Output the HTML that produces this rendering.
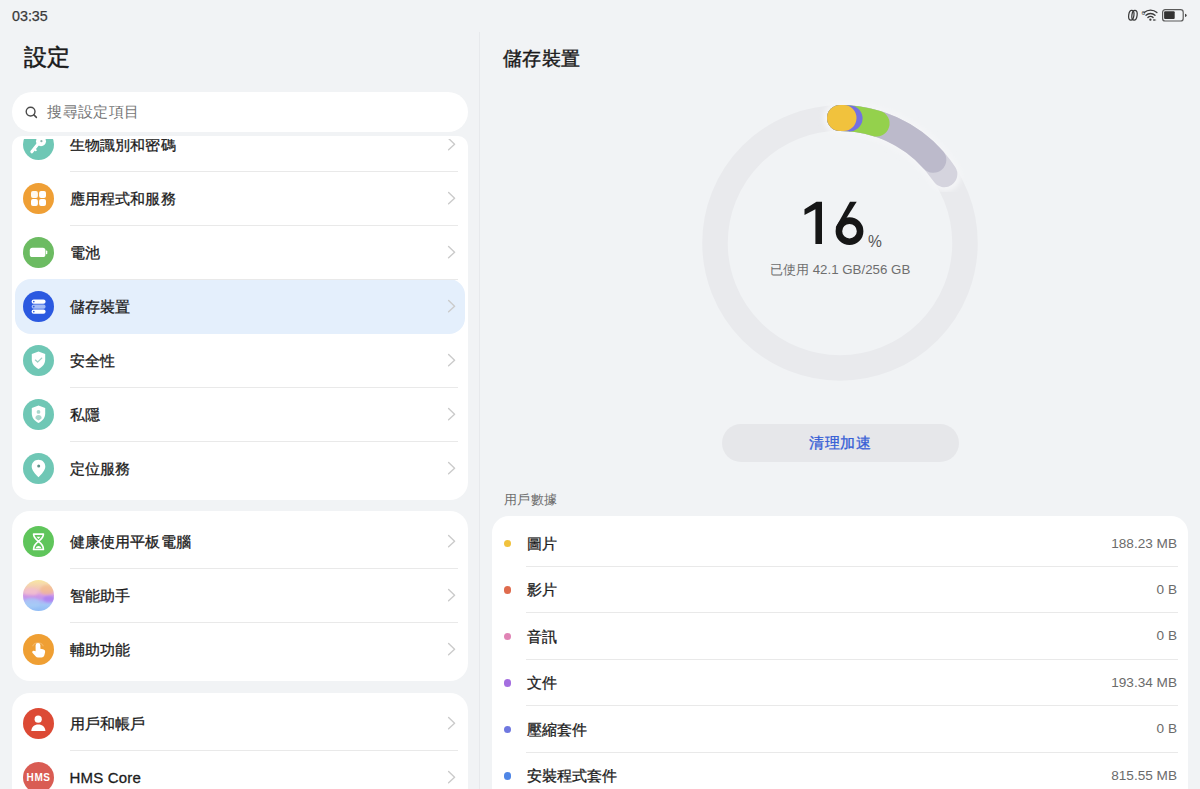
<!DOCTYPE html>
<html lang="zh-Hant-TW"><head><meta charset="utf-8">
<style>
*{margin:0;padding:0;box-sizing:border-box}
html,body{width:1200px;height:789px;overflow:hidden;background:#f1f3f5;font-family:"Liberation Sans",sans-serif;color:#1f1f1f}
.abs{position:absolute}
#time{left:12px;top:7.5px;font-size:14.3px;line-height:16px;color:#3a3a3a;-webkit-text-stroke:0.25px #3a3a3a}
#divider{left:479px;top:32px;width:1px;height:757px;background:#e7e9ec}
#title{left:24px;top:42.5px;font-size:23px;line-height:28px;color:#1a1a1a;-webkit-text-stroke:0.5px #1a1a1a}
#search{left:12px;top:92px;width:456px;height:40px;border-radius:20px;background:#fff}
#search .txt{position:absolute;left:35.3px;top:11px;font-size:15px;letter-spacing:0.4px;line-height:18px;color:#767676}
#clip{left:12px;top:136px;width:456px;height:653px;overflow:hidden;border-radius:10px 10px 0 0}
#fade{left:22px;top:136px;width:436px;height:2.6px;background:#fff}
.card{position:absolute;left:0;width:456px;background:#fff;border-radius:18px;padding:4px 0}
.row{position:relative;height:54px}
.row .ic{position:absolute;left:11px;top:11px}
.row .lb{position:absolute;left:57.5px;top:0;line-height:54px;font-size:15px;letter-spacing:0.2px;color:#1c1c1c;-webkit-text-stroke:0.3px #1c1c1c}
.row .sep{position:absolute;left:57.5px;width:388px;bottom:0;height:1px;background:#e9e9e9}
.row .chev{position:absolute;left:435px;top:19px}
.hl{position:absolute;left:3px;top:165px;width:450px;height:55px;background:#e4effc;border-radius:16px}
#rtitle{left:503px;top:45.5px;font-size:19px;letter-spacing:0.4px;line-height:26px;color:#1a1a1a;-webkit-text-stroke:0.45px #1a1a1a}
.drow{position:relative;height:46.45px}
.dot{position:absolute;left:11.5px;top:19.5px;width:7.4px;height:7.4px;border-radius:50%}
.dl{position:absolute;left:35px;top:0.5px;line-height:46px;font-size:15px;color:#1c1c1c;-webkit-text-stroke:0.3px #1c1c1c}
.dv{position:absolute;right:11px;top:0px;line-height:46px;font-size:13.6px;color:#6b6b6b}
.dsep{position:absolute;left:34px;right:10.5px;bottom:0;height:1px;background:#e9e9e9}
</style></head><body>
<div class="abs" id="time">03:35</div>
<svg class="abs" style="left:1124px;top:6px" width="66" height="18" viewBox="0 0 66 18">
 <ellipse cx="7.3" cy="9.2" rx="2.6" ry="4.9" transform="rotate(8 7.3 9.2)" fill="none" stroke="#3a3a3a" stroke-width="1.25"/>
 <ellipse cx="10.5" cy="9.2" rx="2.6" ry="4.9" transform="rotate(8 10.5 9.2)" fill="none" stroke="#3a3a3a" stroke-width="1.25"/>
 <path d="M20.2 6.6 A9.6 9.6 0 0 1 32.9 6.6" fill="none" stroke="#3a3a3a" stroke-width="1.35" stroke-linecap="round"/>
 <path d="M22.0 9.3 A6.5 6.5 0 0 1 31.0 9.3" fill="none" stroke="#3a3a3a" stroke-width="1.35" stroke-linecap="round"/>
 <path d="M23.9 11.6 A3.7 3.7 0 0 1 29.1 11.6" fill="none" stroke="#3a3a3a" stroke-width="1.35" stroke-linecap="round"/>
 <circle cx="26.4" cy="13.7" r="1.15" fill="#3a3a3a"/>
 <path d="M29.4 13.1 L32.6 14 L29.4 14.9 Z" fill="#3a3a3a"/>
 <text x="17.5" y="8.6" font-family="Liberation Sans" font-size="6.2" fill="#3a3a3a">6</text>
 <rect x="38.6" y="3.6" width="20.6" height="11.4" rx="2.6" fill="none" stroke="#5a5a5a" stroke-width="1.2"/>
 <rect x="40.1" y="5.2" width="10.6" height="7.9" rx="1" fill="#333"/>
 <path d="M61 7.7 A1.6 1.6 0 0 1 61 10.9 Z" fill="#444"/>
</svg>
<div class="abs" id="divider"></div>
<div class="abs" id="title">設定</div>
<div class="abs" id="search">
  <svg class="abs" style="left:12px;top:13px" width="15" height="15" viewBox="0 0 15 15"><circle cx="6.6" cy="6.6" r="4.4" fill="none" stroke="#4a4a4a" stroke-width="1.4"/><path d="M9.9 9.9 L12.4 12.4" stroke="#4a4a4a" stroke-width="1.5" stroke-linecap="round"/></svg>
  <div class="txt">搜尋設定項目</div>
</div>
<div class="abs" id="clip">
  <div class="card" style="top:-22px"><div class="hl"></div><div class="row "><svg class="ic" width="31" height="31" viewBox="0 0 31 31"><circle cx="15.5" cy="15.5" r="15.5" fill="#6fc7b5"/>
<circle cx="18" cy="12.2" r="5" fill="#fff"/><circle cx="18.4" cy="12.2" r="1.1" fill="#8fb3ad"/>
<path d="M15.2 14.8 L8.8 22.8" stroke="#fff" stroke-width="3" stroke-linecap="round"/>
<path d="M11.2 19.8 L12.8 21.2" stroke="#fff" stroke-width="2" stroke-linecap="round"/></svg><div class="lb">生物識別和密碼</div><svg class="chev" width="10" height="16" viewBox="0 0 10 16"><path d="M1.6 1.6 L7.6 7.2 L1.6 12.8" fill="none" stroke="#cbcbcb" stroke-width="1.4" stroke-linecap="round" stroke-linejoin="round"/></svg><div class=sep></div></div><div class="row "><svg class="ic" width="31" height="31" viewBox="0 0 31 31"><circle cx="15.5" cy="15.5" r="15.5" fill="#ef9f35"/>
<rect x="8" y="8" width="6.9" height="6.9" rx="1.9" fill="#fff" fill-opacity="0.92"/>
<rect x="16.1" y="8" width="6.9" height="6.9" rx="1.9" fill="#fff"/>
<rect x="8" y="16.1" width="6.9" height="6.9" rx="1.9" fill="#fff"/>
<rect x="16.1" y="16.1" width="6.9" height="6.9" rx="1.9" fill="#fff"/></svg><div class="lb">應用程式和服務</div><svg class="chev" width="10" height="16" viewBox="0 0 10 16"><path d="M1.6 1.6 L7.6 7.2 L1.6 12.8" fill="none" stroke="#cbcbcb" stroke-width="1.4" stroke-linecap="round" stroke-linejoin="round"/></svg><div class=sep></div></div><div class="row "><svg class="ic" width="31" height="31" viewBox="0 0 31 31"><circle cx="15.5" cy="15.5" r="15.5" fill="#6cbb62"/>
<rect x="6.8" y="10.7" width="15.6" height="9.4" rx="2.6" fill="#fff"/>
<rect x="22.9" y="13.6" width="1.4" height="3.6" rx="0.6" fill="#fff"/></svg><div class="lb">電池</div><svg class="chev" width="10" height="16" viewBox="0 0 10 16"><path d="M1.6 1.6 L7.6 7.2 L1.6 12.8" fill="none" stroke="#cbcbcb" stroke-width="1.4" stroke-linecap="round" stroke-linejoin="round"/></svg><div class=sep></div></div><div class="row "><svg class="ic" width="31" height="31" viewBox="0 0 31 31"><circle cx="15.5" cy="15.5" r="15.5" fill="#2b59e0"/>
<rect x="8.6" y="8.5" width="14" height="4.3" rx="2.15" fill="#fff"/>
<rect x="8.6" y="13.5" width="14" height="4.3" rx="2.15" fill="#a4bcf6"/>
<rect x="8.6" y="18.5" width="14" height="4.3" rx="2.15" fill="#fff"/>
<circle cx="10.8" cy="10.65" r="0.8" fill="#2b59e0"/><circle cx="10.8" cy="15.65" r="0.8" fill="#2b59e0"/><circle cx="10.8" cy="20.65" r="0.8" fill="#2b59e0"/></svg><div class="lb">儲存裝置</div><svg class="chev" width="10" height="16" viewBox="0 0 10 16"><path d="M1.6 1.6 L7.6 7.2 L1.6 12.8" fill="none" stroke="#cbcbcb" stroke-width="1.4" stroke-linecap="round" stroke-linejoin="round"/></svg></div><div class="row "><svg class="ic" width="31" height="31" viewBox="0 0 31 31"><circle cx="15.5" cy="15.5" r="15.5" fill="#6fc7b5"/>
<path d="M15.5 6.6 L22.2 9.1 V14.6 C22.2 18.9 19.3 22.3 15.5 24 C11.7 22.3 8.8 18.9 8.8 14.6 V9.1 Z" fill="#fff"/>
<path d="M12.4 15.1 L14.6 17.1 L18.7 13.1" fill="none" stroke="#9ccfc3" stroke-width="1.3" stroke-linecap="round" stroke-linejoin="round"/></svg><div class="lb">安全性</div><svg class="chev" width="10" height="16" viewBox="0 0 10 16"><path d="M1.6 1.6 L7.6 7.2 L1.6 12.8" fill="none" stroke="#cbcbcb" stroke-width="1.4" stroke-linecap="round" stroke-linejoin="round"/></svg><div class=sep></div></div><div class="row "><svg class="ic" width="31" height="31" viewBox="0 0 31 31"><circle cx="15.5" cy="15.5" r="15.5" fill="#6fc7b5"/>
<path d="M15.5 6.6 L22.2 9.1 V14.6 C22.2 18.9 19.3 22.3 15.5 24 C11.7 22.3 8.8 18.9 8.8 14.6 V9.1 Z" fill="#fff"/>
<circle cx="15.5" cy="12.9" r="1.9" fill="#a9d6cc"/>
<path d="M12.3 19.2 C12.5 16.9 13.8 15.9 15.5 15.9 C17.2 15.9 18.5 16.9 18.7 19.2 C17.8 20.3 16.7 21 15.5 21.4 C14.3 21 13.2 20.3 12.3 19.2 Z" fill="#a9d6cc"/></svg><div class="lb">私隱</div><svg class="chev" width="10" height="16" viewBox="0 0 10 16"><path d="M1.6 1.6 L7.6 7.2 L1.6 12.8" fill="none" stroke="#cbcbcb" stroke-width="1.4" stroke-linecap="round" stroke-linejoin="round"/></svg><div class=sep></div></div><div class="row "><svg class="ic" width="31" height="31" viewBox="0 0 31 31"><circle cx="15.5" cy="15.5" r="15.5" fill="#6fc7b5"/>
<path d="M15.5 6.8 C11.6 6.8 8.7 9.7 8.7 13.6 C8.7 17.5 12.3 21 15.5 24.3 C18.7 21 22.3 17.5 22.3 13.6 C22.3 9.7 19.4 6.8 15.5 6.8 Z" fill="#fff"/>
<circle cx="15.7" cy="12.9" r="1.5" fill="#5f8f86"/></svg><div class="lb">定位服務</div><svg class="chev" width="10" height="16" viewBox="0 0 10 16"><path d="M1.6 1.6 L7.6 7.2 L1.6 12.8" fill="none" stroke="#cbcbcb" stroke-width="1.4" stroke-linecap="round" stroke-linejoin="round"/></svg></div></div>
  <div class="card" style="top:375px"><div class="row "><svg class="ic" width="31" height="31" viewBox="0 0 31 31"><circle cx="15.5" cy="15.5" r="15.5" fill="#5fc55b"/>
<path d="M10.6 8.1 H20.4 C20.4 11.3 18.2 13.5 15.5 15.4 C12.8 13.5 10.6 11.3 10.6 8.1 Z M10.6 23.5 H20.4 C20.4 19.9 18.2 17.3 15.5 15.4 C12.8 17.3 10.6 19.9 10.6 23.5 Z" fill="none" stroke="#fff" stroke-width="1.7" stroke-linejoin="round"/>
<path d="M13.5 10.8 H17.5 L15.5 13 Z" fill="#fff"/><path d="M12.6 22.2 C13.2 20.6 14.2 19.9 15.5 19.9 C16.8 19.9 17.8 20.6 18.4 22.2 Z" fill="#fff"/></svg><div class="lb">健康使用平板電腦</div><svg class="chev" width="10" height="16" viewBox="0 0 10 16"><path d="M1.6 1.6 L7.6 7.2 L1.6 12.8" fill="none" stroke="#cbcbcb" stroke-width="1.4" stroke-linecap="round" stroke-linejoin="round"/></svg><div class=sep></div></div><div class="row "><svg class="ic" width="31" height="31" viewBox="0 0 31 31"><defs><linearGradient id="ga" x1="0" y1="0" x2="0" y2="1"><stop offset="0" stop-color="#f8e7a2"/><stop offset="0.3" stop-color="#f2c6b9"/><stop offset="0.48" stop-color="#dba0e0"/><stop offset="0.62" stop-color="#b7a8f4"/><stop offset="0.8" stop-color="#a2c6f6"/><stop offset="1" stop-color="#90bcf5"/></linearGradient><clipPath id="ca"><circle cx="15.5" cy="15.5" r="15.5"/></clipPath><filter id="fa" x="-20%" y="-20%" width="140%" height="140%"><feGaussianBlur stdDeviation="1.2"/></filter></defs>
<circle cx="15.5" cy="15.5" r="15.5" fill="url(#ga)"/>
<g clip-path="url(#ca)" filter="url(#fa)"><ellipse cx="8" cy="12" rx="7" ry="4" fill="#f3bfd0" opacity="0.8"/><ellipse cx="24" cy="10" rx="7" ry="5" fill="#f2b77e" opacity="0.55"/><path d="M0 15 C8 14 16 16 31 17 V21 C20 20 10 18 0 19 Z" fill="#c88ae8" opacity="0.55"/><ellipse cx="26" cy="19" rx="6" ry="3.5" fill="#a97cf2" opacity="0.7"/><ellipse cx="9" cy="23" rx="8" ry="5" fill="#a9cdf6" opacity="0.6"/></g></svg><div class="lb">智能助手</div><svg class="chev" width="10" height="16" viewBox="0 0 10 16"><path d="M1.6 1.6 L7.6 7.2 L1.6 12.8" fill="none" stroke="#cbcbcb" stroke-width="1.4" stroke-linecap="round" stroke-linejoin="round"/></svg><div class=sep></div></div><div class="row "><svg class="ic" width="31" height="31" viewBox="0 0 31 31"><circle cx="15.5" cy="15.5" r="15.5" fill="#ef9f33"/>
<path d="M9.6 12.2 A5.9 5.9 0 0 1 20.4 12.2" fill="none" stroke="#f4b868" stroke-width="1.1"/>
<path d="M12.6 17.3 V11.3 A2.4 2.4 0 0 1 17.4 11.3 V14.7 L20 15.3 C21.6 15.7 22.4 16.7 22.1 18.2 L21.4 21.1 C21.1 22.6 20 23.4 18.5 23.4 H15 C14.1 23.4 13.3 23 12.8 22.4 L9.6 18.9 C9 18.2 9.2 17.2 10 16.9 C10.8 16.6 11.7 16.7 12.6 17.3 Z" fill="#fff"/></svg><div class="lb">輔助功能</div><svg class="chev" width="10" height="16" viewBox="0 0 10 16"><path d="M1.6 1.6 L7.6 7.2 L1.6 12.8" fill="none" stroke="#cbcbcb" stroke-width="1.4" stroke-linecap="round" stroke-linejoin="round"/></svg></div></div>
  <div class="card" style="top:557px"><div class="row "><svg class="ic" width="31" height="31" viewBox="0 0 31 31"><circle cx="15.5" cy="15.5" r="15.5" fill="#dc4a35"/>
<circle cx="15.2" cy="11.2" r="3.6" fill="#fff"/>
<path d="M8.3 23.1 C8.3 19 11.3 16.4 15.3 16.4 C19.3 16.4 22.4 19 22.4 23.1 Z" fill="#fff"/></svg><div class="lb">用戶和帳戶</div><svg class="chev" width="10" height="16" viewBox="0 0 10 16"><path d="M1.6 1.6 L7.6 7.2 L1.6 12.8" fill="none" stroke="#cbcbcb" stroke-width="1.4" stroke-linecap="round" stroke-linejoin="round"/></svg><div class=sep></div></div><div class="row "><svg class="ic" width="31" height="31" viewBox="0 0 31 31"><circle cx="15.5" cy="15.5" r="15.5" fill="#d95c53"/>
<text x="15.6" y="19.1" text-anchor="middle" font-family="Liberation Sans" font-weight="bold" font-size="10" letter-spacing="0.6" fill="#fff">HMS</text></svg><div class="lb">HMS Core</div><svg class="chev" width="10" height="16" viewBox="0 0 10 16"><path d="M1.6 1.6 L7.6 7.2 L1.6 12.8" fill="none" stroke="#cbcbcb" stroke-width="1.4" stroke-linecap="round" stroke-linejoin="round"/></svg><div class=sep></div></div></div>
</div>

<div class="abs" id="fade"></div>
<div class="abs" id="rtitle">儲存裝置</div>
<svg class="abs" style="left:690.3px;top:92.5px" width="300" height="300" viewBox="0 0 300 300">
  <defs><filter id="halo" x="-30%" y="-30%" width="160%" height="160%"><feGaussianBlur stdDeviation="2.5"/></filter></defs>
  <circle cx="150" cy="150" r="125" fill="none" stroke="#e9eaed" stroke-width="25.5"/>
  <path d="M 150.00 25.00 A 125 125 0 0 1 254.83 81.92" fill="none" stroke="#f4f5f7" stroke-width="33" stroke-linecap="round" filter="url(#halo)"/>
  <path d="M 150.00 25.00 A 125 125 0 0 1 254.36 81.19" fill="none" stroke="#d5d4de" stroke-width="26" stroke-linecap="round"/>
<path d="M 150.00 25.00 A 125 125 0 0 1 243.33 66.85" fill="none" stroke="#bcbacb" stroke-width="26" stroke-linecap="round"/>
<path d="M 150.00 25.00 A 125 125 0 0 1 186.55 30.46" fill="none" stroke="#94d14c" stroke-width="26" stroke-linecap="round"/>
<path d="M 150.00 25.00 A 125 125 0 0 1 159.59 25.37" fill="none" stroke="#7470e2" stroke-width="26" stroke-linecap="round"/>
<path d="M 150.00 25.00 A 125 125 0 0 1 153.49 25.05" fill="none" stroke="#f1c23d" stroke-width="26" stroke-linecap="round"/>
</svg>
<svg class="abs" style="left:798px;top:196px" width="70" height="54" viewBox="0 0 70 54"><path d="M24 5.8 V47.9 H17.4 V13.2 L6.5 19 V13.3 L18.5 5.8 Z" fill="#161616"/><circle cx="51.5" cy="35.2" r="10.6" fill="none" stroke="#161616" stroke-width="6.6"/><path d="M52 5.8 H58.7 L44.3 28.6 L37.6 31.8 Z" fill="#161616"/></svg>
<div class="abs" style="left:868px;top:233px;font-size:15.6px;line-height:18px;color:#555">%</div>
<div class="abs" style="left:770px;top:261px;font-size:13px;line-height:18px;color:#6e6e6e">已使用<span style="font-size:13.3px"> 42.1 GB/256 GB</span></div>
<div class="abs" style="left:721.5px;top:424px;width:237px;height:38px;border-radius:19px;background:#e6e7ea;text-align:center;line-height:38px;font-size:15px;letter-spacing:0.6px;text-indent:0.6px;color:#3760d6;-webkit-text-stroke:0.3px #3760d6">清理加速</div>
<div class="abs" style="left:503.5px;top:491px;font-size:13px;letter-spacing:0.5px;line-height:18px;color:#6d6d6d">用戶數據</div>
<div class="abs" style="left:492px;top:516px;width:696px;height:300px;border-radius:17px;background:#fff;padding-top:4.5px">
<div class="drow"><div class="dot" style="background:#f1c23d"></div><div class="dl">圖片</div><div class="dv">188.23 MB</div><div class=dsep></div></div><div class="drow"><div class="dot" style="background:#df6b4d"></div><div class="dl">影片</div><div class="dv">0 B</div><div class=dsep></div></div><div class="drow"><div class="dot" style="background:#e084b5"></div><div class="dl">音訊</div><div class="dv">0 B</div><div class=dsep></div></div><div class="drow"><div class="dot" style="background:#a46ee0"></div><div class="dl">文件</div><div class="dv">193.34 MB</div><div class=dsep></div></div><div class="drow"><div class="dot" style="background:#6f78e0"></div><div class="dl">壓縮套件</div><div class="dv">0 B</div><div class=dsep></div></div><div class="drow"><div class="dot" style="background:#4f86e6"></div><div class="dl">安裝程式套件</div><div class="dv">815.55 MB</div></div>
</div>
</body></html>
